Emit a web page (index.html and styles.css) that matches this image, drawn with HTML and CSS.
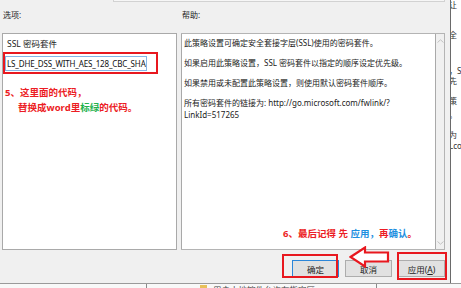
FILE: index.html
```html
<!DOCTYPE html>
<html>
<head>
  <title>SSL 密码套件顺序</title>
  <link rel="stylesheet" href="styles.css">
</head>
<body>
  <div class="screen">
    <div class="dialog">
      <div class="frame-edge"></div>
      <div class="labels">
        <span class="label-left">选项:</span>
        <span>帮助:</span>
      </div>
      <div class="panes">
        <div class="options">
          <div class="opt-title">SSL 密码套件</div>
          <div class="field-wrap">
            <div class="field">LS_DHE_DSS_WITH_AES_128_CBC_SHA<span class="caret"></span></div>
            <div class="mark mark-field"></div>
          </div>
          <div class="note note-5">
            <p>5、这里面的代码，</p>
            <p class="indent">替换成word里<span class="green">标绿</span>的代码。</p>
          </div>
        </div>
        <div class="help">
          <div class="help-text">
            <p>此策略设置可确定安全套接字层(SSL)使用的密码套件。</p>
            <p>如果启用此策略设置，SSL 密码套件以指定的顺序设定优先级。</p>
            <p>如果禁用或未配置此策略设置，则使用默认密码套件顺序。</p>
            <p>所有密码套件的链接为: http://go.microsoft.com/fwlink/?<br>LinkId=517265</p>
          </div>
          <div class="scrollbar">
            <svg width="7" height="4" viewBox="0 0 7 4"><polyline points="0.5,3.5 3.5,0.8 6.5,3.5" fill="none" stroke="#c2c2c2" stroke-width="1"/></svg>
            <svg width="7" height="4" viewBox="0 0 7 4"><polyline points="0.5,0.5 3.5,3.2 6.5,0.5" fill="none" stroke="#c2c2c2" stroke-width="1"/></svg>
          </div>
          <div class="note note-6">6、最后记得 先 <span class="blue">应用，</span>再<span class="blue">确认</span>。</div>
        </div>
      </div>
      <div class="buttons">
        <div class="btn-wrap">
          <button class="btn btn-default">确定</button>
          <div class="mark mark-ok"></div>
        </div>
        <button class="btn">取消</button>
        <div class="btn-wrap">
          <button class="btn">应用(<u>A</u>)</button>
          <div class="mark mark-apply"></div>
        </div>
        <svg class="arrow" width="42" height="22" viewBox="0 0 42 22">
          <polygon points="1.5,11 16,1.5 16,6.5 39,6.5 39,15.5 16,15.5 16,20.5" fill="#fff" stroke="#e8181f" stroke-width="2.2" stroke-linejoin="miter"/>
        </svg>
      </div>
    </div>
    <div class="side">
      <div class="side-line l1">让</div>
      <div class="side-line l2">全</div>
      <div class="side-line l3">，S</div>
      <div class="side-line l4">先</div>
      <div class="side-line l5">策</div>
      <div class="side-line l6">。</div>
      <div class="side-line l7">为</div>
      <div class="side-line l8">Lco</div>
    </div>
  </div>
  <div class="taskstrip">
    <div class="cell cell-a"></div>
    <div class="cell cell-b">
      <span class="folder"></span>
      <span class="strip-text">用户本地控件允许在指定区</span>
    </div>
    <div class="cell cell-c"></div>
  </div>
</body>
</html>
```

FILE: styles.css
```css
body {
  margin: 0;
  width: 461px;
  height: 288px;
  overflow: hidden;
  background-color: #f0f0f0;
  font-family: "Noto Sans", "Noto Sans CJK SC", sans-serif;
  font-size: 8px;
  color: #222;
}

p {
  margin: 0;
}

.screen {
  display: flex;
  height: 283px;
}

.dialog {
  width: 450px;
  border-right: 1px solid #6a6a6a;
}

.frame-edge {
  margin-left: 113px;
  width: 330px;
  height: 1px;
  border: 1px solid #d2d2d2;
  border-top: none;
  background-color: #f6f6f6;
}

.labels {
  display: flex;
  margin-top: 7px;
  height: 12px;
  line-height: 12px;
  padding-left: 3px;
}

.label-left {
  width: 179px;
}

.panes {
  display: flex;
  gap: 4px;
  margin-top: 12px;
  padding-left: 2px;
  height: 217px;
}

.options {
  width: 170px;
  padding: 4px 0 0 3px;
  background-color: #fff;
  border: 1px solid #a9a9a9;
}

.opt-title {
  line-height: 12px;
  padding-left: 1px;
  font-size: 8.5px;
}

.field-wrap {
  position: relative;
  margin-top: 6px;
  margin-left: -1px;
  width: 142px;
}

.field {
  height: 13px;
  line-height: 13px;
  border: 1px solid #86b6e6;
  padding-left: 1px;
  font-size: 8px;
  letter-spacing: -0.15px;
  white-space: nowrap;
  overflow: hidden;
  color: #111;
}

.caret {
  display: inline-block;
  width: 1px;
  height: 10px;
  margin-left: 1px;
  vertical-align: -2px;
  background-color: #000;
}

.mark {
  position: absolute;
  border: 2.5px solid #e8181f;
  box-sizing: border-box;
}

.mark-field {
  left: -2px;
  top: -4px;
  width: 155px;
  height: 22px;
}

.note {
  font-weight: bold;
  color: #ec1c24;
  font-size: 9.5px;
  line-height: 15px;
  white-space: nowrap;
}

.note-5 {
  margin-top: 14px;
  margin-left: -1px;
}

.indent {
  padding-left: 13px;
}

.green {
  color: #22b14c;
}

.blue {
  color: #1e8fe0;
}

.help {
  position: relative;
  display: flex;
  width: 263px;
  background-color: #f0f0f0;
  border: 1px solid #b4b4b4;
  border-left: none;
}

.help-text {
  flex: 1;
  background-color: #fff;
  border: 1px solid #a9a9a9;
  border-top: none;
  border-bottom: none;
  padding: 3px 0 0 2px;
  line-height: 12px;
  white-space: nowrap;
}

.help-text p {
  margin-bottom: 8px;
}

.scrollbar {
  width: 8px;
  display: flex;
  flex-direction: column;
  justify-content: space-between;
  align-items: center;
  padding: 5px 0 4px;
}

.note-6 {
  position: absolute;
  left: 102px;
  top: 193px;
  line-height: 14px;
}

.buttons {
  position: relative;
  display: flex;
  justify-content: flex-end;
  gap: 6px;
  margin-top: 10px;
  padding-right: 5px;
}

.btn-wrap {
  position: relative;
}

.btn {
  display: block;
  width: 47px;
  height: 17px;
  padding: 0;
  font-family: "Noto Sans", "Noto Sans CJK SC", sans-serif;
  font-size: 8.5px;
  color: #222;
  background-color: #e1e1e1;
  border: 1px solid #adadad;
}

.btn-default {
  border-color: #2b86d9;
}

.mark-ok {
  left: -10px;
  top: -6px;
  width: 56px;
  height: 24px;
}

.mark-apply {
  left: -1px;
  top: -8px;
  width: 50px;
  height: 28px;
}

.arrow {
  position: absolute;
  left: 349px;
  top: -14px;
}

.side {
  flex: 1;
  overflow: hidden;
  background-color: #fff;
  font-size: 8px;
  line-height: 10px;
  color: #333;
}

.side-line {
  white-space: nowrap;
  margin-left: -2px;
}

.l1 { margin-top: 0; }
.l2 { margin-top: 20px; }
.l3 { margin-top: 26px; }
.l4 { margin-top: 0; }
.l5 { margin-top: 10px; }
.l6 { margin-top: 4px; }
.l7 { margin-top: 10px; }
.l8 { margin-top: 1px; }

.taskstrip {
  display: flex;
  height: 4px;
  border-top: 1px solid #9a9a9a;
  background-color: #f8f8f8;
  overflow: hidden;
}

.cell-a {
  width: 146px;
  border-right: 1px solid #8a8a8a;
}

.cell-b {
  width: 230px;
  border-right: 1px solid #8a8a8a;
  display: flex;
  align-items: flex-start;
  padding-left: 53px;
  box-sizing: border-box;
}

.folder {
  width: 7px;
  height: 4px;
  margin-top: 1px;
  background-color: #e8c15a;
}

.strip-text {
  margin-left: 6px;
  margin-top: 1px;
  font-size: 8.5px;
  line-height: 10px;
  white-space: nowrap;
  color: #444;
}

.cell-c {
  flex: 1;
}
```
